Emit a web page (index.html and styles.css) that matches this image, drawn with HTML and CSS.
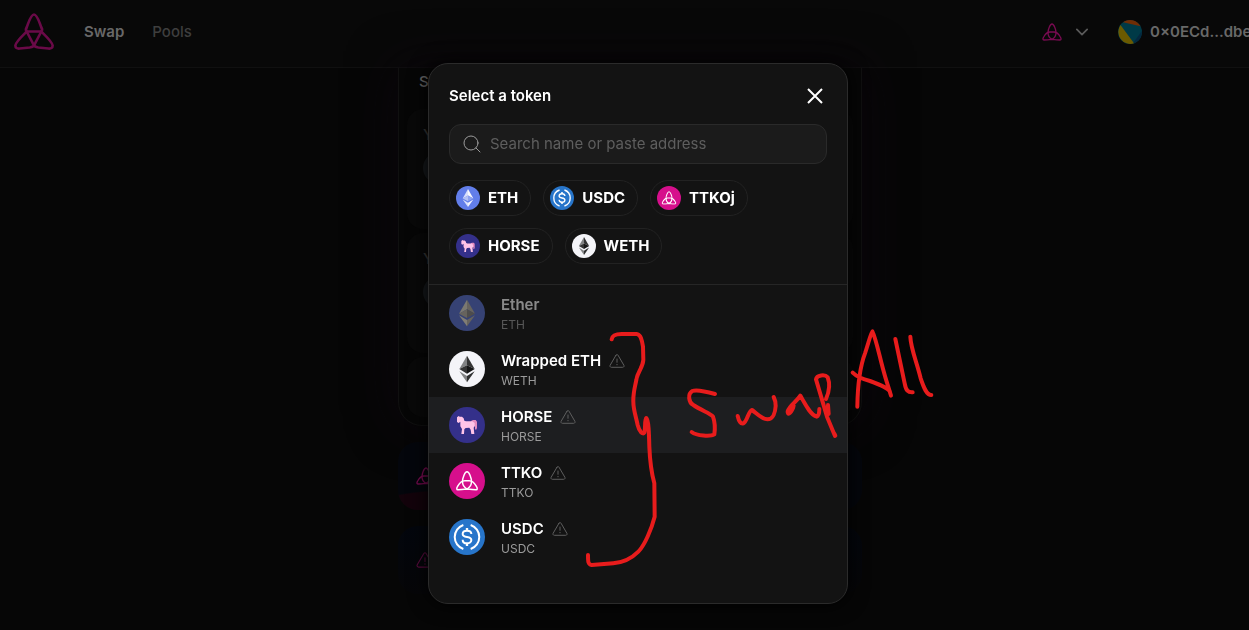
FILE: index.html
```
<!DOCTYPE html>
<html lang="en">

<head>
    <meta charset="UTF-8">
    <meta name="viewport" content="width=device-width, initial-scale=1.0">
    <title>Swap</title>
    <link rel="stylesheet" href="styles.css">
</head>

<body>
    <!-- Shared icons -->
    <svg class="sprite" aria-hidden="true">
        <symbol id="icon-logo" viewBox="0 0 120 110">
            <path d="M38 55 C35 52 35 48 38 43 C44 28 50 4 60 4 C70 4 76 28 82 43 C85 48 85 52 82 55 Z" />
            <path d="M38 55 C26 67 4 88 4 97 C4 104 9 107 17 106 L47 103 C54 102 58 100 60 97 Z" />
            <path d="M82 55 C94 67 116 88 116 97 C116 104 111 107 103 106 L73 103 C66 102 62 100 60 97 Z" />
        </symbol>
        <symbol id="icon-knot" viewBox="0 0 60 54">
            <path d="M30 3 C24 3 18 20 18 29 C18 39 23 45 30 49 C37 45 42 39 42 29 C42 20 36 3 30 3 Z" />
            <path d="M30 49 C22 50 12 51 6 51 C2 51 2 47 5 42 C10 33 16 27 24 27 H36 C44 27 50 33 55 42 C58 47 58 51 54 51 C48 51 38 50 30 49 Z" />
        </symbol>
        <symbol id="icon-warning" viewBox="0 0 16 16">
            <path d="M7 2.200 1.100 12.300C.600 13.200 1.200 14.300 2.300 14.300H13.700C14.800 14.300 15.400 13.200 14.900 12.300L9 2.200C8.500 1.300 7.500 1.300 7 2.200Z M8 6V9.300 M8 11.400V11.800" />
        </symbol>
        <symbol id="token-eth" viewBox="0 0 108 108">
            <circle cx="54" cy="54" r="54" fill="#627eea" />
            <path d="M54 14 V43 L30 56 Z" fill="#d9e0fb" />
            <path d="M54 14 V43 L78 56 Z" fill="#f7f8fe" />
            <path d="M54 43 V69 L30 56 Z" fill="#b4c1f5" />
            <path d="M54 43 V69 L78 56 Z" fill="#8ea2ef" />
            <path d="M30 61 L54 75 V94 Z" fill="#d9e0fb" />
            <path d="M78 61 L54 75 V94 Z" fill="#f1f3fd" />
        </symbol>
        <symbol id="token-ether" viewBox="0 0 108 108">
            <circle cx="54" cy="54" r="54" fill="#5a72d4" />
            <path d="M54 14 V43 L30 56 Z" fill="#e3dfcf" />
            <path d="M54 14 V43 L78 56 Z" fill="#b8b3a8" />
            <path d="M54 43 V69 L30 56 Z" fill="#b9b3a6" />
            <path d="M54 43 V69 L78 56 Z" fill="#8a8786" />
            <path d="M30 61 L54 75 V94 Z" fill="#ece7d6" />
            <path d="M78 61 L54 75 V94 Z" fill="#b8b3a8" />
        </symbol>
        <symbol id="token-weth" viewBox="0 0 108 108">
            <circle cx="54" cy="54" r="54" fill="#f4f4f8" />
            <path d="M54 14 V43 L31 54 Z" fill="#828384" />
            <path d="M54 14 V43 L77 54 Z" fill="#343434" />
            <path d="M54 43 V68 L31 54 Z" fill="#343434" />
            <path d="M54 43 V68 L77 54 Z" fill="#151515" />
            <path d="M31 61 L54 75 V94 Z" fill="#828384" />
            <path d="M77 61 L54 75 V94 Z" fill="#2f3030" />
        </symbol>
        <symbol id="token-usdc" viewBox="0 0 108 108">
            <circle cx="54" cy="54" r="54" fill="#2775ca" />
            <path d="M43 18 A38 38 0 0 0 43 90 M65 18 A38 38 0 0 1 65 90" fill="none" stroke="#fff" stroke-width="6" />
            <path d="M54 27 V36 M54 72 V81" fill="none" stroke="#fff" stroke-width="7" />
            <path d="M67 45 C67 38 61 35 54 35 C46 35 41 39 41 45 C41 59 67 49 67 63 C67 69 61 73 54 73 C46 73 41 69 41 62" fill="none" stroke="#fff" stroke-width="6" />
        </symbol>
        <symbol id="token-ttko" viewBox="0 0 108 108">
            <circle cx="54" cy="54" r="54" fill="#d60f8c" />
            <use href="#icon-knot" x="20" y="23" width="68" height="61" fill="none" stroke="#fff" stroke-width="4" />
        </symbol>
        <symbol id="token-horse" viewBox="0 0 108 108">
            <circle cx="54" cy="54" r="54" fill="#34308a" />
            <path d="M66 42 L72 39 H80 L84 44 V63 L81 69 L78 66 V58 L72 56 Z" fill="#e58cc0" />
            <path d="M24 31 L29 27 L32 29 H39 L44 34 L46 41 L51 43 H70 L77 48 V58 L74 62 L76 81 H67 L65 68 L61 62 L50 63 L46 67 L45 81 H37 L39 66 L34 58 V44 L29 48 L24 45 Z" fill="#ffc4e8" />
        </symbol>
    </svg>

    <!-- Navbar -->
    <header class="navbar">
        <a href="#" class="logo" aria-label="Home"><svg class="stroke"><use href="#icon-logo" /></svg></a>
        <nav class="nav-links">
            <a href="#" class="active">Swap</a>
            <a href="#">Pools</a>
        </nav>
        <button class="network" aria-label="Select network">
            <svg class="stroke knot"><use href="#icon-knot" /></svg>
            <svg class="stroke chevron" viewBox="0 0 14 8"><path d="M1 1 L7 7 L13 1" /></svg>
        </button>
        <button class="account">
            <svg class="avatar" viewBox="0 0 24 24">
                <circle cx="12" cy="12" r="12" fill="#003a47" />
                <path d="M2.500 5 L16 23.300 A12 12 0 0 1 2.500 5 Z" fill="#6b5a00" />
                <path d="M5 2.300 A12 12 0 0 1 22.500 6.300 Z" fill="#702d05" />
                <path d="M23.900 11 A12 12 0 0 1 16 23.300 L15.500 22.500 Z" fill="#04283f" />
            </svg>
            <span>0×0ECd...dbeE</span>
        </button>
    </header>

    <!-- Swap page behind the dialog -->
    <main class="page">
        <section class="swap-card">
            <h2>Swap</h2>
            <div class="panel">
                <p>You pay</p>
                <span class="coin"></span>
            </div>
            <div class="panel">
                <p>You receive</p>
                <span class="coin"></span>
            </div>
            <div class="panel small"></div>
        </section>
        <div class="promo pink">
            <svg class="stroke knot"><use href="#icon-knot" /></svg>
        </div>
        <div class="promo">
            <svg class="stroke warn"><use href="#icon-warning" /></svg>
        </div>
    </main>

    <!-- Token selector -->
    <div class="overlay">
        <div class="modal" role="dialog" aria-labelledby="modal-title">
            <div class="modal-top">
                <div class="modal-header">
                    <h1 id="modal-title">Select a token</h1>
                    <button class="close" aria-label="Close">
                        <svg viewBox="0 0 24 24"><path d="M5 5 L19 19 M19 5 L5 19" /></svg>
                    </button>
                </div>
                <label class="search">
                    <svg viewBox="0 0 20 20"><circle cx="9" cy="9" r="7" /><path d="M14 14 L18 18" /></svg>
                    <input type="text" placeholder="Search name or paste address" aria-label="Search name or paste address">
                </label>
                <div class="chips">
                    <button class="chip"><svg><use href="#token-eth" /></svg>ETH</button>
                    <button class="chip"><svg><use href="#token-usdc" /></svg>USDC</button>
                    <button class="chip"><svg><use href="#token-ttko" /></svg>TTKOj</button>
                    <button class="chip"><svg><use href="#token-horse" /></svg>HORSE</button>
                    <button class="chip"><svg><use href="#token-weth" /></svg>WETH</button>
                </div>
            </div>
            <div class="token-list">
                <button class="token disabled" disabled>
                    <svg class="token-icon"><use href="#token-ether" /></svg>
                    <span class="token-text">
                        <span class="name">Ether</span>
                        <span class="symbol">ETH</span>
                    </span>
                </button>
                <button class="token">
                    <svg class="token-icon"><use href="#token-weth" /></svg>
                    <span class="token-text">
                        <span class="name">Wrapped ETH <svg class="stroke warning"><use href="#icon-warning" /></svg></span>
                        <span class="symbol">WETH</span>
                    </span>
                </button>
                <button class="token selected">
                    <svg class="token-icon"><use href="#token-horse" /></svg>
                    <span class="token-text">
                        <span class="name">HORSE <svg class="stroke warning"><use href="#icon-warning" /></svg></span>
                        <span class="symbol">HORSE</span>
                    </span>
                </button>
                <button class="token">
                    <svg class="token-icon"><use href="#token-ttko" /></svg>
                    <span class="token-text">
                        <span class="name">TTKO <svg class="stroke warning"><use href="#icon-warning" /></svg></span>
                        <span class="symbol">TTKO</span>
                    </span>
                </button>
                <button class="token">
                    <svg class="token-icon"><use href="#token-usdc" /></svg>
                    <span class="token-text">
                        <span class="name">USDC <svg class="stroke warning"><use href="#icon-warning" /></svg></span>
                        <span class="symbol">USDC</span>
                    </span>
                </button>
            </div>

            <!-- Handwritten note: bracket, "Swap All" -->
            <svg class="scribble" viewBox="0 0 1080 780" role="img" aria-label="Swap All">
                <path d="M95 58 C97 46 105 42 125 42 L170 42 C182 43 186 60 189 80 L190 120 C188 145 172 155 169 180 C164 205 159 220 160 245 C160 270 168 290 173 315 C178 335 188 345 193 338 C197 325 193 298 199 294 C206 300 207 340 208 380 C210 430 216 465 223 490 L224 590 C215 625 195 675 175 695 C150 720 125 728 100 730 L35 735 C24 733 24 725 24 705" />
                <path d="M405 222 C370 212 345 210 337 213 C322 222 326 248 340 255 C365 272 392 280 399 290 C406 310 405 330 403 343 C392 350 350 348 335 336" />
                <path d="M473 288 C477 305 482 312 490 310 C502 305 505 272 516 270 C530 280 545 298 562 298 C580 298 586 275 587 258 C588 245 583 235 581 231" />
                <path d="M640 262 C632 282 622 286 623 274 C630 255 650 245 661 227 C672 245 690 285 710 290 C718 287 718 275 718 267 M641 258 L629 276" />
                <path d="M765 348 L741 290 L708 178 C710 165 735 162 743 172 C750 190 750 210 738 237 M744 255 L746 282 M763 341 L766 347" />
                <path d="M832 260 C833 190 840 140 855 100 C865 70 874 35 877 34 C890 60 900 120 917 175 L933 227 M818 158 C830 170 850 178 870 183 C895 192 925 205 930 215" />
                <path d="M946 57 L974 190 C978 212 984 218 998 217 M991 50 C992 85 1010 125 1022 175 C1032 205 1040 225 1054 225" />
            </svg>
        </div>
    </div>
</body>

</html>
```
FILE: styles.css
```
body {
    font-family: Inter, "Liberation Sans", Arial, sans-serif;
    margin: 0;
    background-color: #060606;
    color: #fff;
    font-size: 15px;
    line-height: 24px;
    height: 100vh;
    overflow: hidden;
}

h1,
h2,
p {
    margin: 0;
    font-size: 15px;
    font-weight: 500;
}

button {
    font: inherit;
    color: inherit;
    background: none;
    border: none;
    padding: 0;
    cursor: pointer;
}

svg {
    display: block;
    flex-shrink: 0;
}

.sprite {
    display: none;
}

.stroke {
    fill: none;
    stroke: currentColor;
    stroke-linecap: round;
    stroke-linejoin: round;
}

/* Navbar */
.navbar {
    display: flex;
    align-items: center;
    height: 63px;
    padding: 0 0 4px 14px;
    background-color: #080808;
    border-bottom: 1px solid #101010;
}

.logo {
    color: #6a0a48;
}

.logo svg {
    width: 40px;
    height: 37px;
    stroke-width: 8px;
}

.nav-links {
    display: flex;
    gap: 28px;
    margin-left: 30px;
    margin-right: auto;
}

.nav-links a {
    color: #3e3e3e;
    text-decoration: none;
    font-weight: 500;
}

.nav-links .active {
    color: #686868;
    font-weight: 600;
}

.network {
    display: flex;
    align-items: center;
    gap: 14px;
    margin-right: 30px;
    color: #5a5a5a;
}

.knot {
    width: 20px;
    height: 18px;
    color: #7a0b52;
    stroke-width: 4px;
}

.chevron {
    width: 12px;
    height: 8px;
    stroke-width: 2px;
}

.account {
    display: flex;
    align-items: center;
    gap: 8px;
    width: 131px;
    overflow: hidden;
    white-space: nowrap;
    color: #686868;
    font-weight: 600;
}

.avatar {
    width: 24px;
    height: 24px;
}

/* Page */
.page {
    display: flex;
    flex-direction: column;
    align-items: center;
    gap: 16px;
    padding-left: 11px;
}

.swap-card {
    box-sizing: border-box;
    width: 464px;
    max-width: 100%;
    padding: 2px 8px 8px;
    border: 1px solid #101010;
    border-top: none;
    border-radius: 0 0 24px 24px;
    background-color: #060606;
    box-shadow: 0 0 50px #0c060d;
}

.swap-card h2 {
    padding: 0 12px;
    margin-bottom: 15px;
    color: #686868;
}

.panel {
    box-sizing: border-box;
    height: 120px;
    padding: 14px 16px;
    margin-bottom: 4px;
    border-radius: 16px;
    background-color: #090909;
    color: #3a3a3a;
}

.panel.small {
    height: 60px;
    margin-bottom: 0;
}

.coin {
    display: block;
    width: 32px;
    height: 32px;
    margin-top: 5px;
    border-radius: 50%;
    background-color: #171a1d;
}

.promo {
    box-sizing: border-box;
    display: flex;
    align-items: center;
    width: 464px;
    max-width: 100%;
    height: 68px;
    padding: 0 18px;
    border-radius: 20px;
    background: linear-gradient(#03060d, #060608);
}

.promo.pink {
    background: radial-gradient(ellipse 90px 26px at 50px 74px, #13030b 95%, #04060c);
}

.warn {
    width: 18px;
    height: 18px;
    color: #5c0b40;
}

/* Token selector */
.overlay {
    position: fixed;
    inset: 0;
    display: flex;
    justify-content: center;
    align-items: flex-start;
    padding: 63px 0 0 27px;
}

.modal {
    position: relative;
    box-sizing: border-box;
    width: 420px;
    max-width: 100%;
    padding-bottom: 38px;
    background-color: #131313;
    border: 1px solid #2b2b2b;
    border-radius: 20px;
    box-shadow: 0 0 20px #000;
}

.modal-top {
    display: flex;
    flex-direction: column;
    gap: 16px;
    padding: 20px;
    border-bottom: 1px solid #262626;
}

.modal-header {
    display: flex;
    justify-content: space-between;
    align-items: center;
}

.modal-header h1 {
    font-weight: 600;
}

.close svg {
    width: 24px;
    height: 24px;
    stroke: #fff;
    stroke-width: 2px;
}

.search {
    display: flex;
    align-items: center;
    gap: 8px;
    box-sizing: border-box;
    height: 40px;
    padding: 0 12px;
    background-color: #1b1b1b;
    border: 1px solid #2a2a2a;
    border-radius: 12px;
}

.search svg {
    width: 20px;
    height: 20px;
    fill: none;
    stroke: #9b9b9b;
    stroke-linecap: round;
}

.search input {
    flex: 1;
    min-width: 0;
    padding: 0;
    background: none;
    border: none;
    outline: none;
    color: #fff;
    font: inherit;
}

.search input::placeholder {
    color: #5e5e5e;
}

.chips {
    display: flex;
    flex-wrap: wrap;
    gap: 12px;
}

.chip {
    display: flex;
    align-items: center;
    gap: 8px;
    height: 36px;
    padding: 0 12px 0 6px;
    border: 1px solid #222;
    border-radius: 18px;
    font-weight: 700;
}

.chip svg {
    width: 24px;
    height: 24px;
}

.token {
    display: flex;
    align-items: center;
    gap: 16px;
    width: 100%;
    height: 56px;
    padding: 0 20px;
    text-align: left;
}

.token.selected {
    background-color: #1d1e20;
}

.token.disabled {
    opacity: 0.5;
    cursor: default;
}

.token-icon {
    width: 36px;
    height: 36px;
}

.token-text {
    display: flex;
    flex-direction: column;
}

.name {
    display: flex;
    align-items: center;
    gap: 8px;
    font-weight: 600;
}

.symbol {
    color: #9b9b9b;
    font-size: 12px;
    line-height: 16px;
}

.warning {
    width: 16px;
    height: 16px;
    color: #5e5e5e;
}

/* Red pen over the dialog */
.scribble {
    position: absolute;
    left: 151px;
    top: 256px;
    width: 360px;
    height: 260px;
    fill: none;
    stroke: #e81c1c;
    stroke-width: 12px;
    stroke-linecap: round;
    stroke-linejoin: round;
    pointer-events: none;
}
```
